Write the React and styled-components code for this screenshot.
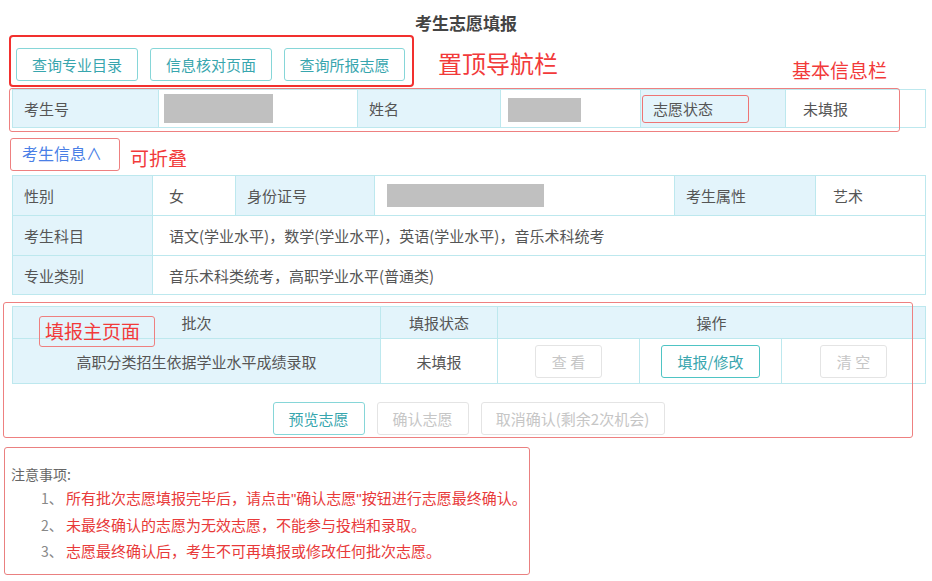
import React from 'react'
import styled, { createGlobalStyle } from 'styled-components'

const GlobalStyle = createGlobalStyle`
  body {
    margin: 0;
    background: #fff;
    font-family: "Noto Sans CJK SC", "Noto Sans", sans-serif;
    color: #555;
  }
`

const basicCols = [146, 199, 143, 140, 145, 140]
const infoCols = [140, 83, 139, 300, 141, 110]
const mainCols = [368, 117, 142, 142, 144]

const App = () => {
    const notes = [
        <>所有批次志愿填报完毕后，请点击<Quote>"</Quote>确认志愿<Quote>"</Quote>按钮进行志愿最终确认。</>,
        '未最终确认的志愿为无效志愿，不能参与投档和录取。',
        '志愿最终确认后，考生不可再填报或修改任何批次志愿。',
    ]

    return (
        <Page>
            <GlobalStyle />
            <Title>考生志愿填报</Title>

            <NavRow>
                <NavBox>
                    <Btn $w={122}>查询专业目录</Btn>
                    <Btn $w={122}>信息核对页面</Btn>
                    <Btn $w={121}>查询所报志愿</Btn>
                </NavBox>
                <NavLabel>置顶导航栏</NavLabel>
                <SideLabel>基本信息栏</SideLabel>
            </NavRow>

            <TableWrap $top={2}>
                <Table>
                    <colgroup>
                        {basicCols.map((w, i) => <col key={i} style={{ width: w }} />)}
                    </colgroup>
                    <tbody>
                        <tr style={{ height: 38 }}>
                            <Td $label>考生号</Td>
                            <Td $pad={5}><Redacted $w={109} $h={29} /></Td>
                            <Td $label>姓名</Td>
                            <Td $pad={7}><Redacted $w={73} $h={24} $shift={2} /></Td>
                            <Td $label $pad={1}><StatusMark>志愿状态</StatusMark></Td>
                            <Td $pad={17}>未填报</Td>
                        </tr>
                    </tbody>
                </Table>
                <Annot style={{ left: -3, top: -1, width: 891, height: 44 }} />
            </TableWrap>

            <CollapseRow>
                <CollapseTab>考生信息∧</CollapseTab>
                <FoldLabel>可折叠</FoldLabel>
            </CollapseRow>

            <TableWrap $top={4}>
                <Table>
                    <colgroup>
                        {infoCols.map((w, i) => <col key={i} style={{ width: w }} />)}
                    </colgroup>
                    <tbody>
                        <tr style={{ height: 40 }}>
                            <Td $label>性别</Td>
                            <Td>女</Td>
                            <Td $label>身份证号</Td>
                            <Td $pad={12}><Redacted $w={157} $h={23} /></Td>
                            <Td $label>考生属性</Td>
                            <Td $pad={17}>艺术</Td>
                        </tr>
                        <tr style={{ height: 40 }}>
                            <Td $label>考生科目</Td>
                            <Td colSpan={5}>语文(学业水平)，数学(学业水平)，英语(学业水平)，音乐术科统考</Td>
                        </tr>
                        <tr style={{ height: 39 }}>
                            <Td $label>专业类别</Td>
                            <Td colSpan={5}>音乐术科类统考，高职学业水平(普通类)</Td>
                        </tr>
                    </tbody>
                </Table>
            </TableWrap>

            <MainWrap>
                <Table>
                    <colgroup>
                        {mainCols.map((w, i) => <col key={i} style={{ width: w }} />)}
                    </colgroup>
                    <thead>
                        <tr style={{ height: 32 }}>
                            <Th>批次</Th>
                            <Th>填报状态</Th>
                            <Th colSpan={3}>操作</Th>
                        </tr>
                    </thead>
                    <tbody>
                        <tr style={{ height: 45 }}>
                            <Td $label $center>高职分类招生依据学业水平成绩录取</Td>
                            <Td $center>未填报</Td>
                            <Td $center><Btn $w={67} $off>查 看</Btn></Td>
                            <Td $center><Btn $w={99} $solid>填报/修改</Btn></Td>
                            <Td $center><Btn $w={67} $off>清 空</Btn></Td>
                        </tr>
                    </tbody>
                </Table>
                <ActionRow>
                    <Btn $w={92}>预览志愿</Btn>
                    <Btn $w={92} $off>确认志愿</Btn>
                    <Btn $w={184} $off>取消确认(剩余2次机会)</Btn>
                </ActionRow>
                <Annot style={{ left: -9, top: -4, width: 910, height: 136 }} />
                <MainLabel>填报主页面</MainLabel>
            </MainWrap>

            <Notes>
                <NotesTitle>注意事项:</NotesTitle>
                {notes.map((n, i) => (
                    <NoteItem key={i}>
                        <NoteNum>{i + 1}、</NoteNum>
                        <NoteText>{n}</NoteText>
                    </NoteItem>
                ))}
            </Notes>
        </Page>
    )
}

export default App

const Page = styled.div`
    width: 932px;
    height: 581px;
    position: relative;
    overflow: hidden;
`
const Title = styled.div`
    box-sizing: border-box;
    height: 35px;
    padding: 12px 0 0 0;
    line-height: 22px;
    text-align: center;
    font-size: 17px;
    font-weight: bold;
    color: #444;
`
const NavRow = styled.div`
    position: relative;
    display: flex;
    height: 52px;
`
const NavBox = styled.div`
    box-sizing: border-box;
    margin-left: 9px;
    width: 405px;
    height: 52px;
    border: 2px solid #f2302e;
    border-radius: 4px;
    display: flex;
    gap: 12px;
    padding: 11px 0 0 5px;
`
const NavLabel = styled.div`
    margin-left: 24px;
    padding-top: 14px;
    font-size: 24px;
    line-height: 28px;
    color: #f23a3a;
`
const SideLabel = styled.div`
    position: absolute;
    left: 792px;
    top: 23px;
    font-size: 19px;
    line-height: 24px;
    color: #f23a3a;
`
const Btn = styled.button`
    box-sizing: border-box;
    width: ${p => p.$w}px;
    height: 33px;
    padding: 0;
    background: #fff;
    border: 1px solid ${p => p.$off ? '#e4e4e4' : p.$solid ? '#4fc4c4' : '#86d6d8'};
    border-radius: 3px;
    color: ${p => p.$off ? '#c6c6c6' : '#38a6ae'};
    font-family: inherit;
    font-size: 15px;
    white-space: nowrap;
    vertical-align: middle;
`
const TableWrap = styled.div`
    position: relative;
    margin: ${p => p.$top}px 0 0 12px;
    width: 913px;
`
const Table = styled.table`
    width: 913px;
    border-collapse: collapse;
    table-layout: fixed;
    border: 1px solid #9edfe4;
`
const Td = styled.td`
    box-sizing: border-box;
    padding: 0 0 0 ${p => p.$pad ?? (p.$label ? 11 : 16)}px;
    border: 1px solid #bde8ee;
    background: ${p => p.$label ? '#e3f4fb' : '#fff'};
    font-size: 15px;
    color: #555;
    text-align: ${p => p.$center ? 'center' : 'left'};
    ${p => p.$center ? 'padding: 0;' : ''}
    white-space: nowrap;
`
const Th = styled.th`
    border: 1px solid #bde8ee;
    background: #e3f4fb;
    font-weight: normal;
    font-size: 15px;
    color: #555;
    text-align: center;
`
const Redacted = styled.span`
    display: block;
    width: ${p => p.$w}px;
    height: ${p => p.$h}px;
    margin-top: ${p => p.$shift || 0}px;
    background: #c0c0c0;
`
const StatusMark = styled.span`
    box-sizing: border-box;
    display: flex;
    align-items: center;
    width: 107px;
    height: 28px;
    padding-left: 10px;
    border: 1.5px solid #ee7474;
    border-radius: 3px;
`
const Annot = styled.div`
    position: absolute;
    box-sizing: border-box;
    border: 1.5px solid #ee8080;
    border-radius: 3px;
    pointer-events: none;
`
const CollapseRow = styled.div`
    display: flex;
    align-items: center;
    margin: 10px 0 0 10px;
    height: 33px;
`
const CollapseTab = styled.div`
    box-sizing: border-box;
    display: flex;
    align-items: center;
    width: 110px;
    height: 33px;
    padding: 0 0 3px 11px;
    border: 1.5px solid #ee8080;
    border-radius: 3px;
    color: #4a7fe6;
    font-size: 16px;
`
const FoldLabel = styled.div`
    margin-left: 10px;
    padding-top: 6px;
    font-size: 19px;
    color: #f23a3a;
`
const MainWrap = styled.div`
    position: relative;
    margin: 11px 0 0 12px;
    width: 913px;
    padding-bottom: 3px;
`
const ActionRow = styled.div`
    display: flex;
    justify-content: center;
    gap: 12px;
    margin-top: 18px;
`
const MainLabel = styled.div`
    position: absolute;
    left: 27px;
    top: 10px;
    box-sizing: border-box;
    width: 116px;
    height: 31px;
    padding-left: 5px;
    border: 1.5px solid #ee8080;
    border-radius: 3px;
    font-size: 19px;
    line-height: 28px;
    color: #f23a3a;
`
const Notes = styled.div`
    box-sizing: border-box;
    margin: 9px 0 0 4px;
    width: 526px;
    height: 128px;
    padding: 15px 0 0 6px;
    border: 1.5px solid #ea8080;
    border-radius: 3px;
`
const NotesTitle = styled.div`
    font-size: 14px;
    line-height: 22px;
    color: #666;
`
const NoteItem = styled.div`
    display: flex;
    margin-left: 30px;
    line-height: 26px;
    font-size: 15px;
`
const NoteNum = styled.span`
    width: 25px;
    color: #888;
    font-size: 14px;
`
const NoteText = styled.span`
    color: #e83a3a;
    white-space: nowrap;
`
const Quote = styled.span`
    font-family: "Liberation Sans", sans-serif;
`
